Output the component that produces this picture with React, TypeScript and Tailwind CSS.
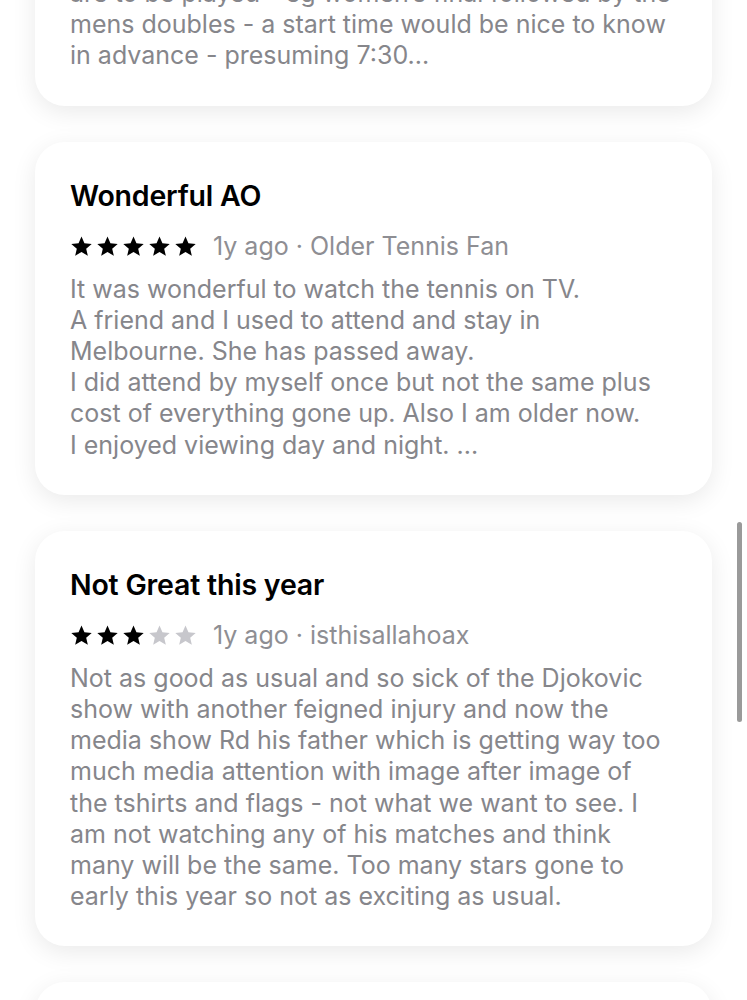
import React from 'react';

type Review = {
  title?: string;
  rating?: number;
  meta?: string;
  lines: string[];
};

const reviews: Review[] = [
  {
    lines: [
      'are to be played - eg women\u2019s final followed by the',
      'mens doubles - a start time would be nice to know',
      'in advance - presuming 7:30...',
    ],
  },
  {
    title: 'Wonderful AO',
    rating: 5,
    meta: '1y ago \u00b7 Older Tennis Fan',
    lines: [
      'It was wonderful to watch the tennis on TV.',
      'A friend and I used to attend and stay in',
      'Melbourne. She has passed away.',
      'I did attend by myself once but not the same plus',
      'cost of everything gone up. Also I am older now.',
      'I enjoyed viewing day and night. ...',
    ],
  },
  {
    title: 'Not Great this year',
    rating: 3,
    meta: '1y ago \u00b7 isthisallahoax',
    lines: [
      'Not as good as usual and so sick of the Djokovic',
      'show with another feigned injury and now the',
      'media show Rd his father which is getting way too',
      'much media attention with image after image of',
      'the tshirts and flags - not what we want to see. I',
      'am not watching any of his matches and think',
      'many will be the same. Too many stars gone to',
      'early this year so not as exciting as usual.',
    ],
  },
];

function Star({ filled }: { filled: boolean }) {
  return (
    <svg viewBox="0 0 24 24" className="w-[23px] h-[23px]">
      <path
        d="M12 1.6l3.05 7.02 7.6.68-5.76 5.02 1.72 7.44L12 17.86l-6.61 3.9 1.72-7.44L1.35 9.3l7.6-.68z"
        fill={filled ? '#000000' : '#c7c7cc'}
      />
    </svg>
  );
}

function ReviewCard({ review }: { review: Review }) {
  return (
    <div className="bg-white rounded-[30px] px-[35px] pt-[37px] pb-[34px] shadow-[0_6px_24px_rgba(0,0,0,0.085)]">
      {review.title && (
        <div className="text-[28.5px] leading-[34px] font-semibold text-black tracking-[-0.2px]">
          {review.title}
        </div>
      )}
      {review.rating !== undefined && (
        <div className="flex items-center h-[30px] mt-[19px]">
          <div className="flex gap-[3px]">
            {[1, 2, 3, 4, 5].map((n) => (
              <Star key={n} filled={n <= (review.rating ?? 0)} />
            ))}
          </div>
          <span className="ml-[16px] text-[25px] text-[#8e8e93]">{review.meta}</span>
        </div>
      )}
      <div className={`text-[25px] leading-[31.2px] text-[#86868b] ${review.title ? 'mt-[12px]' : ''}`}>
        {review.lines.map((line, i) => (
          <div key={i} className="whitespace-nowrap">
            {line}
          </div>
        ))}
      </div>
    </div>
  );
}

export default function App() {
  return (
    <div
      className="relative h-[1000px] w-[747px] overflow-hidden bg-white"
      style={{ fontFamily: 'Inter, "Noto Sans", sans-serif' }}
    >
      <div className="flex flex-col gap-[36px] px-[35px] mt-[-59px]">
        {reviews.map((r, i) => (
          <ReviewCard key={i} review={r} />
        ))}
        {/* next card, only its top edge is on screen */}
        <div className="bg-white rounded-[30px] h-[300px] shadow-[0_6px_24px_rgba(0,0,0,0.085)]" />
      </div>

      {/* scroll indicator */}
      <div className="absolute right-[5px] top-[522px] w-[5px] h-[200px] rounded-full bg-[#9a9a9a]" />
    </div>
  );
}
